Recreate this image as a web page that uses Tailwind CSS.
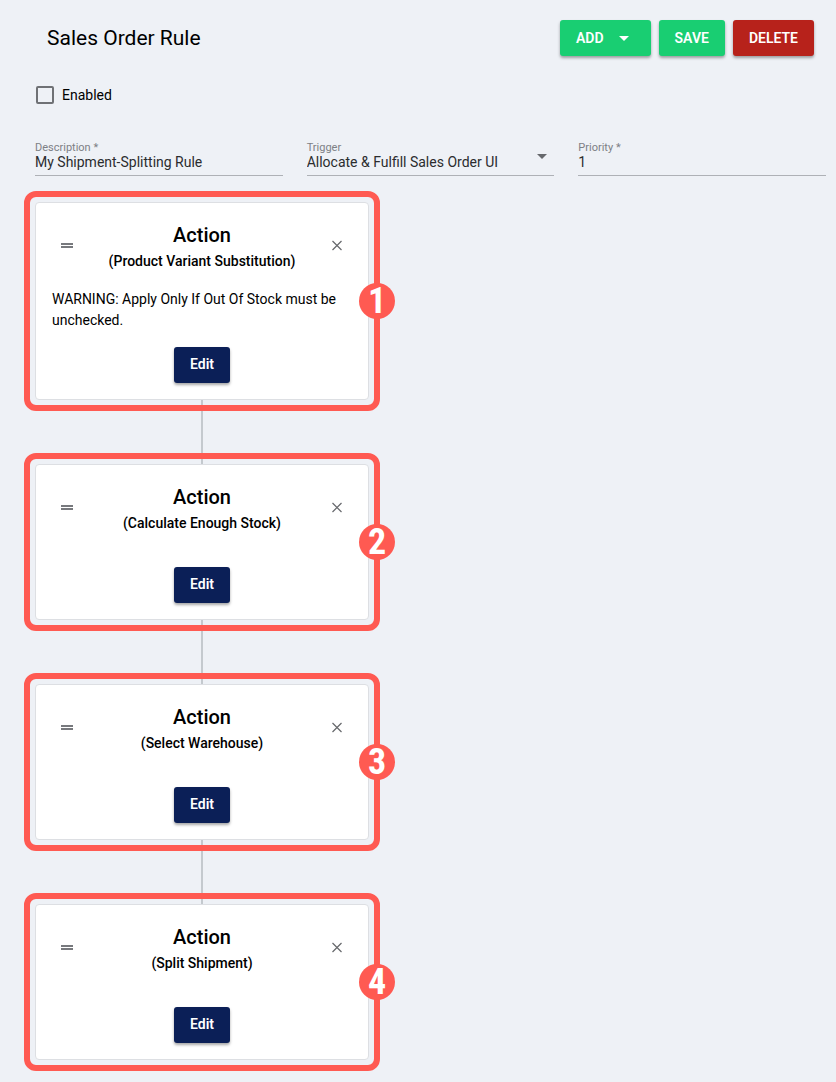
<!DOCTYPE html>
<html lang="en">
<head>
    <meta charset="UTF-8">
    <meta name="viewport" content="width=device-width, initial-scale=1.0">
    <title>Sales Order Rule</title>
    <script src="https://cdn.jsdelivr.net/npm/@tailwindcss/browser@4"></script>
</head>
<body class="min-h-screen bg-[#eef1f6] font-[Roboto,sans-serif] text-sm text-black">

    <!-- Header -->
    <header class="flex items-center justify-between pt-5 pr-[22px] pl-[47px]">
        <h1 class="text-[21px] leading-9">Sales Order Rule</h1>
        <div class="flex gap-2">
            <button type="button" class="flex h-9 items-center gap-3 rounded-[3px] bg-[#19ce72] pr-[19px] pl-4 font-semibold text-white shadow-[0_2px_3px_rgba(0,0,0,0.35)]">
                ADD
                <svg class="size-4" viewBox="0 0 16 16" fill="currentColor"><path d="M3 6h10l-5 5z"/></svg>
            </button>
            <button type="button" class="h-9 rounded-[3px] bg-[#19ce72] px-4 font-semibold text-white shadow-[0_2px_3px_rgba(0,0,0,0.35)]">SAVE</button>
            <button type="button" class="h-9 rounded-[3px] bg-[#b7221b] px-4 font-semibold text-white shadow-[0_2px_3px_rgba(0,0,0,0.35)]">DELETE</button>
        </div>
    </header>

    <form class="pr-[10px] pl-[35px]">
        <!-- Enabled -->
        <div class="mt-[29px] flex items-center gap-2 pl-px">
            <input type="checkbox" id="enabled" class="size-[18px] appearance-none rounded-xs border-2 border-[#6f7175] checked:bg-[#0b1f57]">
            <label for="enabled" class="leading-5">Enabled</label>
        </div>

        <!-- Rule fields -->
        <div class="mt-[37px] grid grid-cols-3 gap-6">
            <div class="border-b border-[#aeb1b6]">
                <label for="description" class="block text-[11px] leading-3 text-[#7d8085]">Description *</label>
                <input type="text" id="description" value="My Shipment-Splitting Rule" class="block h-[21px] w-full pb-[5px] text-[#2b2c2e] outline-none">
            </div>
            <div class="relative border-b border-[#aeb1b6]">
                <label for="trigger" class="block text-[11px] leading-3 text-[#7d8085]">Trigger</label>
                <select id="trigger" class="block h-[21px] w-full appearance-none pb-[5px] leading-4 text-[#2b2c2e] outline-none">
                    <option>Allocate &amp; Fulfill Sales Order UI</option>
                </select>
                <svg class="pointer-events-none absolute top-[7px] right-1 size-4 text-[#66686c]" viewBox="0 0 16 16" fill="currentColor"><path d="M3 5h10l-5 5z"/></svg>
            </div>
            <div class="border-b border-[#aeb1b6]">
                <label for="priority" class="block text-[11px] leading-3 text-[#7d8085]">Priority *</label>
                <input type="text" id="priority" value="1" class="block h-[21px] w-full pb-[5px] text-[#2b2c2e] outline-none">
            </div>
        </div>
    </form>

    <!-- Actions -->
    <main class="mt-[15px] flex w-full max-w-[380px] flex-col pb-[11px] pl-6">

        <section class="relative z-10 rounded-xl border-6 border-[#ff5a52] p-[5px]">
            <div class="rounded-sm border border-[#dddfe3] bg-white p-4">
                <div class="flex items-center justify-between">
                    <button type="button" aria-label="Move" class="flex w-[30px] justify-center">
                        <svg class="size-3" viewBox="0 0 12 12" fill="#77797d"><path d="M0 4h12v2H0zM0 7h12v2H0z"/></svg>
                    </button>
                    <div class="text-center font-medium">
                        <h2 class="text-xl leading-8">Action</h2>
                        <p class="leading-5">(Product Variant Substitution)</p>
                    </div>
                    <button type="button" aria-label="Remove" class="flex w-[30px] justify-center">
                        <svg class="size-3" viewBox="0 0 12 12" fill="none" stroke="#66686c" stroke-width="1.2"><path d="M1.5 2l9 9M10.5 2l-9 9"/></svg>
                    </button>
                </div>
                <p class="mt-[18px] leading-[21px]">WARNING: Apply Only If Out Of Stock must be unchecked.</p>
                <button type="button" class="mx-auto mt-4 block h-9 rounded-[3px] bg-[#0b1f57] px-4 pb-0.5 font-semibold text-white shadow-[0_2px_3px_rgba(0,0,0,0.35)]">Edit</button>
            </div>
            <span class="absolute top-1/2 -right-[21px] flex size-9 -translate-y-1/2 items-center justify-center rounded-full bg-[#ff5a52] font-['Roboto_Condensed',Roboto,sans-serif] text-4xl font-bold text-white">1</span>
        </section>

        <div class="-my-[11px] h-16 w-0.5 self-center bg-[#c4c9ce]"></div>

        <section class="relative z-10 rounded-xl border-6 border-[#ff5a52] p-[5px]">
            <div class="rounded-sm border border-[#dddfe3] bg-white p-4">
                <div class="flex items-center justify-between">
                    <button type="button" aria-label="Move" class="flex w-[30px] justify-center">
                        <svg class="size-3" viewBox="0 0 12 12" fill="#77797d"><path d="M0 4h12v2H0zM0 7h12v2H0z"/></svg>
                    </button>
                    <div class="text-center font-medium">
                        <h2 class="text-xl leading-8">Action</h2>
                        <p class="leading-5">(Calculate Enough Stock)</p>
                    </div>
                    <button type="button" aria-label="Remove" class="flex w-[30px] justify-center">
                        <svg class="size-3" viewBox="0 0 12 12" fill="none" stroke="#66686c" stroke-width="1.2"><path d="M1.5 2l9 9M10.5 2l-9 9"/></svg>
                    </button>
                </div>
                <button type="button" class="mx-auto mt-[34px] block h-9 rounded-[3px] bg-[#0b1f57] px-4 pb-0.5 font-semibold text-white shadow-[0_2px_3px_rgba(0,0,0,0.35)]">Edit</button>
            </div>
            <span class="absolute top-1/2 -right-[21px] flex size-9 -translate-y-1/2 items-center justify-center rounded-full bg-[#ff5a52] font-['Roboto_Condensed',Roboto,sans-serif] text-4xl font-bold text-white">2</span>
        </section>

        <div class="-my-[11px] h-16 w-0.5 self-center bg-[#c4c9ce]"></div>

        <section class="relative z-10 rounded-xl border-6 border-[#ff5a52] p-[5px]">
            <div class="rounded-sm border border-[#dddfe3] bg-white p-4">
                <div class="flex items-center justify-between">
                    <button type="button" aria-label="Move" class="flex w-[30px] justify-center">
                        <svg class="size-3" viewBox="0 0 12 12" fill="#77797d"><path d="M0 4h12v2H0zM0 7h12v2H0z"/></svg>
                    </button>
                    <div class="text-center font-medium">
                        <h2 class="text-xl leading-8">Action</h2>
                        <p class="leading-5">(Select Warehouse)</p>
                    </div>
                    <button type="button" aria-label="Remove" class="flex w-[30px] justify-center">
                        <svg class="size-3" viewBox="0 0 12 12" fill="none" stroke="#66686c" stroke-width="1.2"><path d="M1.5 2l9 9M10.5 2l-9 9"/></svg>
                    </button>
                </div>
                <button type="button" class="mx-auto mt-[34px] block h-9 rounded-[3px] bg-[#0b1f57] px-4 pb-0.5 font-semibold text-white shadow-[0_2px_3px_rgba(0,0,0,0.35)]">Edit</button>
            </div>
            <span class="absolute top-1/2 -right-[21px] flex size-9 -translate-y-1/2 items-center justify-center rounded-full bg-[#ff5a52] font-['Roboto_Condensed',Roboto,sans-serif] text-4xl font-bold text-white">3</span>
        </section>

        <div class="-my-[11px] h-16 w-0.5 self-center bg-[#c4c9ce]"></div>

        <section class="relative z-10 rounded-xl border-6 border-[#ff5a52] p-[5px]">
            <div class="rounded-sm border border-[#dddfe3] bg-white p-4">
                <div class="flex items-center justify-between">
                    <button type="button" aria-label="Move" class="flex w-[30px] justify-center">
                        <svg class="size-3" viewBox="0 0 12 12" fill="#77797d"><path d="M0 4h12v2H0zM0 7h12v2H0z"/></svg>
                    </button>
                    <div class="text-center font-medium">
                        <h2 class="text-xl leading-8">Action</h2>
                        <p class="leading-5">(Split Shipment)</p>
                    </div>
                    <button type="button" aria-label="Remove" class="flex w-[30px] justify-center">
                        <svg class="size-3" viewBox="0 0 12 12" fill="none" stroke="#66686c" stroke-width="1.2"><path d="M1.5 2l9 9M10.5 2l-9 9"/></svg>
                    </button>
                </div>
                <button type="button" class="mx-auto mt-[34px] block h-9 rounded-[3px] bg-[#0b1f57] px-4 pb-0.5 font-semibold text-white shadow-[0_2px_3px_rgba(0,0,0,0.35)]">Edit</button>
            </div>
            <span class="absolute top-1/2 -right-[21px] flex size-9 -translate-y-1/2 items-center justify-center rounded-full bg-[#ff5a52] font-['Roboto_Condensed',Roboto,sans-serif] text-4xl font-bold text-white">4</span>
        </section>
    </main>

</body>
</html>
